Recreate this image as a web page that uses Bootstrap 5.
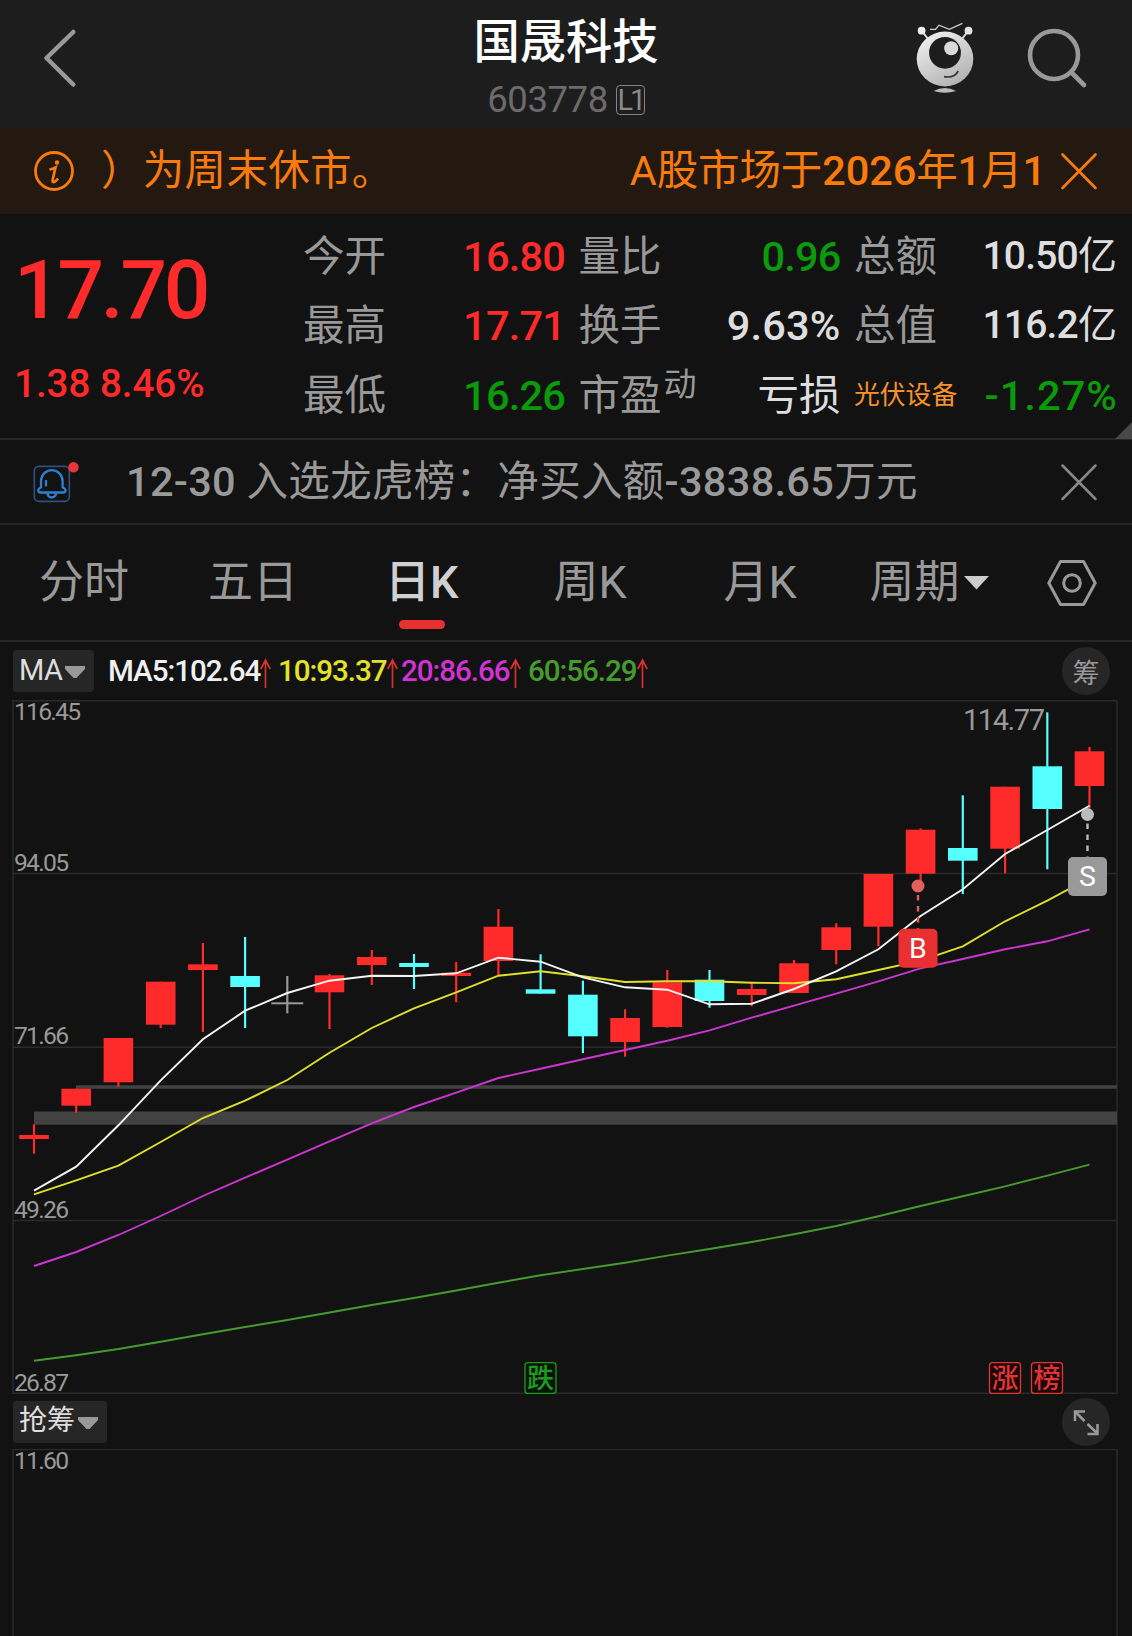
<!DOCTYPE html>
<html lang="zh-CN" data-bs-theme="dark">
<head>
<meta charset="utf-8">
<meta name="viewport" content="width=device-width, initial-scale=1">
<title>国晟科技 603778</title>
<link href="https://cdn.jsdelivr.net/npm/bootstrap@5.3.0/dist/css/bootstrap.min.css" rel="stylesheet">
<style>
  :root { --up:#ff2a2a; --down:#0a9b0a; --dim:#999; --lit:#dedede; --line:#262626; }
  html, body { height:1636px; overflow:hidden; }
  body { background:#121212; color:var(--dim); font-family:Roboto,"Noto Sans CJK SC",sans-serif; font-size:41.5px; line-height:1; }
  svg { display:block; flex:none; }
  .top-bar { height:128px; background:#1d1d1d; display:grid; grid-template-columns:1fr auto 1fr; }
  .stock-name { font-size:46.3px; font-weight:500; line-height:50px; color:#fff; margin-top:17px; }
  .stock-code { font-size:36.5px; line-height:36px; color:#6b6b6b; margin-top:15px; letter-spacing:-.4px; }
  .level-tag { border:1.5px solid #858585; border-radius:4px; width:29px; height:30px; font-size:29px; line-height:28px; color:#8a8a8a; letter-spacing:-3px; }
  .notice-bar { height:86px; background:#231911; color:#f87b0d; line-height:84px; }
  .notice-tail { margin-left:26px; letter-spacing:.3px; }
  .notice-next { letter-spacing:-.1px; margin-right:13px; }
  .din { font-weight:500; }
  .quote { height:226px; border-bottom:2px solid var(--line); padding:8px 15px 0 15px; }
  .quote-main { width:288px; color:var(--up); }
  .price { font-size:82px; font-weight:500; line-height:84px; margin-top:26px; letter-spacing:-3.2px; margin-left:-1px; }
  .change { font-size:38.5px; line-height:40px; margin-top:32px; letter-spacing:0; margin-left:-1px; white-space:pre; font-weight:500; }
  .quote-row { height:69.3px; line-height:69.3px; }
  .num { letter-spacing:-.8px; font-weight:500; }
  .wide-a { letter-spacing:.2px; } .wide-b { letter-spacing:1.1px; margin-right:-1px; }
  .up { color:var(--up); } .down { color:var(--down); } .lit { color:var(--lit); }
  .pe-kind { font-size:33px; position:relative; top:-14px; margin-left:2px; }
  .sector { font-size:25.8px; color:#f7922b; }
  .yi { font-size:39px; }
  .corner { right:0; bottom:-1px; }
  .news { height:85px; border-bottom:2px solid var(--line); line-height:83px; }
  .news-text { margin-left:46px; letter-spacing:.3px; }
  .periods { height:117px; border-bottom:2px solid var(--line); font-size:45px; line-height:116px; }
  .periods > * { position:relative; }
  .period-on { color:#d0d0d0; font-weight:500; margin-left:-2px; }
  .period-on::after { content:""; position:absolute; left:50%; margin-left:-23px; top:94.5px; width:46px; height:9px; border-radius:5px; background:#e83030; }
  .ma-bar { height:58px; padding:0 22px 0 13px; font-size:29.6px; }
  .pick { height:42px; background:#262626; color:var(--lit); border-radius:4px; line-height:40px; padding-left:6px; }
  .pick-ma { width:81px; font-size:29px; letter-spacing:-.6px; }
  .pick-chip { width:94px; font-size:28px; }
  .ma-list { font-weight:500; letter-spacing:-1.05px; line-height:56px; }
  .round { width:48px; height:48px; background:#262626; font-size:27px; border-radius:50%; line-height:54px; }
  .sub-bar { height:55px; padding:0 22px 0 13px; }
  .tick { fill:#999; font-size:24.7px; }
</style>
</head>
<body>
<header class="top-bar">
  <svg width="60" height="80" viewBox="34 15 60 80" style="margin:15px 0 0 34px" fill="none" stroke="#999" stroke-width="4.5" stroke-linecap="round" stroke-linejoin="round"><path d="M73.300 32 46.500 58 73.300 84.500"/></svg>
  <div class="text-center">
    <div class="stock-name">国晟科技</div>
    <div class="stock-code d-flex justify-content-center align-items-center gap-2">603778<span class="level-tag">L1</span></div>
  </div>
  <svg class="ms-auto" width="184" height="82" viewBox="910 15 184 82" style="margin:15px 38px 0 0">
    <defs><linearGradient id="silver" x1="0" y1="0" x2=".6" y2="1"><stop offset="0" stop-color="#f6f6f6"/><stop offset="1" stop-color="#b4b4b4"/></linearGradient></defs>
    <path d="M922 31 928 39M968 31 962 39" stroke="#ddd" stroke-width="2"/>
    <circle cx="921.6" cy="30.7" r="3.9" fill="#eee"/><circle cx="968.5" cy="30.7" r="3.9" fill="#e4e4e4"/>
    <path d="M930 29.4H935.5L939 25.2 949.4 29.4 962.4 23.4" fill="none" stroke="#ccc" stroke-width="1.3"/>
    <ellipse cx="945" cy="59" rx="28.3" ry="27.4" fill="url(#silver)"/>
    <circle cx="945" cy="52.8" r="15.9" fill="#1d1d1d"/><circle cx="951.2" cy="48.3" r="7" fill="#d9d9d9"/>
    <path d="M944 76.6Q954.500 78.500 958.200 71" fill="none" stroke="#333" stroke-width="1.7"/>
    <path d="M933.500 91Q945 85 956 91Q945 94.500 933.500 91Z" fill="#bbb"/>
    <g fill="none" stroke="#999" stroke-width="4.6" stroke-linecap="round"><circle cx="1054" cy="55" r="24"/><path d="M1072 73 1084 85"/></g>
  </svg>
</header>

<div class="notice-bar d-flex align-items-center">
  <svg width="42" height="42" viewBox="0 0 42 42" style="margin-left:33px" fill="none" stroke="#f87b0d" stroke-width="2.800"><circle cx="21" cy="21" r="18.500"/><circle cx="24" cy="12.500" r="2.200" fill="#f87b0d" stroke="none"/><path d="M16.500 19.500Q20 19 22.500 17.500L19.700 29.500Q19 33 21.500 31.800 23.500 30.500 25 28.500" stroke-width="2.700"/></svg>
  <span class="notice-tail">）为周末休市。</span>
  <span class="notice-next ms-auto">A股市场于<span class="din">2026</span>年<span class="din">1</span>月<span class="din">1</span></span>
  <svg width="40" height="40" viewBox="0 0 40 40" style="margin-right:33px" stroke="#f87b0d" stroke-width="2.700" stroke-linecap="round"><path d="M3.500 3.500 36.500 37M36.500 3.500 3.500 37"/></svg>
</div>

<section class="quote d-flex position-relative">
  <div class="quote-main">
    <div class="price">17.70</div>
    <div class="change">1.38 8.46%</div>
  </div>
  <div class="flex-grow-1 d-flex" style="gap:13.500px">
    <div style="width:262px">
      <div class="quote-row d-flex justify-content-between"><span>今开</span><span class="num up">16.80</span></div>
      <div class="quote-row d-flex justify-content-between"><span>最高</span><span class="num up">17.71</span></div>
      <div class="quote-row d-flex justify-content-between"><span>最低</span><span class="num down">16.26</span></div>
    </div>
    <div style="width:262px">
      <div class="quote-row d-flex justify-content-between"><span>量比</span><span class="num down">0.96</span></div>
      <div class="quote-row d-flex justify-content-between"><span>换手</span><span class="num lit wide-a">9.63%</span></div>
      <div class="quote-row d-flex justify-content-between"><span>市盈<span class="pe-kind">动</span></span><span class="lit">亏损</span></div>
    </div>
    <div style="width:263px">
      <div class="quote-row d-flex justify-content-between"><span>总额</span><span class="lit yi"><span class="num">10.50</span>亿</span></div>
      <div class="quote-row d-flex justify-content-between"><span>总值</span><span class="lit yi"><span class="num">116.2</span>亿</span></div>
      <div class="quote-row d-flex justify-content-between"><span class="sector">光伏设备</span><span class="num down wide-b">-1.27%</span></div>
    </div>
  </div>
  <svg class="corner position-absolute" width="17" height="17"><path d="M17 0V17H0Z" fill="#484848"/></svg>
</section>

<div class="news d-flex align-items-center">
  <svg width="48" height="48" viewBox="32 456 48 48" style="margin-left:32px" fill="none" stroke="#2b80d0" stroke-width="2.300" stroke-linecap="round" stroke-linejoin="round">
    <rect x="34.300" y="464.300" width="35" height="35" rx="4.500" stroke="#2c4f7d" stroke-width="1.700"/>
    <path d="M41 485.500V479A10.800 10.800 0 0 1 62.600 479V485.500Q65.500 486.500 65.500 488.500 65.500 490.500 63 490.500H40.500Q38.300 490.500 38.300 488.500 38.300 486.500 41 485.500ZM47.500 492Q48.500 495.500 51.800 495.500 55 495.500 56 492M46 479V483.500"/>
    <circle cx="73.500" cy="465.300" r="5.200" fill="#e83535" stroke="none"/>
  </svg>
  <span class="news-text"><span class="din">12-30</span> 入选龙虎榜：净买入额<span class="din">-3838.65</span>万元</span>
  <svg class="ms-auto" width="40" height="40" viewBox="0 0 40 40" style="margin-right:33px" stroke="#888" stroke-width="2.500" stroke-linecap="round"><path d="M3.500 3.500 36.500 37M36.500 3.500 3.500 37"/></svg>
</div>

<nav class="periods d-flex">
  <span style="margin-left:39px;width:169px">分时</span>
  <span style="width:179px">五日</span>
  <span class="period-on">日K</span>
  <span style="margin-left:95px;width:170px">周K</span>
  <span style="width:146px">月K</span>
  <span>周期</span>
  <svg width="25" height="14" style="margin:50.500px 0 0 5px"><path d="M0 0H25L12.500 13.500Z" fill="#ccc"/></svg>
  <svg class="ms-auto" width="52" height="52" viewBox="0 0 52 52" style="margin:31.500px 34px 0 0" fill="none" stroke="#999" stroke-width="3"><path d="M2.800 26 14.500 4.500H37.500L49.200 26 37.500 47.500H14.500Z" stroke-linejoin="round"/><circle cx="26" cy="26" r="8.300"/></svg>
</nav>

<div class="ma-bar d-flex align-items-center">
  <div class="pick pick-ma d-flex">MA<svg width="20" height="13" style="margin:16px 0 0 3px"><path d="M0 0H20V3L11.500 12H8.500L0 3Z" fill="#999"/></svg></div>
  <div class="ma-list d-flex" style="margin-left:14px" id="maList"></div>
  <div class="round ms-auto text-center">筹</div>
</div>

<svg id="kline" width="1132" height="694" viewBox="0 700 1132 694"></svg>

<div class="sub-bar d-flex align-items-center">
  <div class="pick pick-chip d-flex">抢筹<svg width="20" height="13" style="margin:16px 0 0 3px"><path d="M0 0H20V3L11.500 12H8.500L0 3Z" fill="#999"/></svg></div>
  <div class="round ms-auto d-flex align-items-center justify-content-center"><svg width="28" height="28" viewBox="0 0 28 28" fill="none" stroke="#999" stroke-width="2.500"><path d="M3 13V3.500H13M3.500 4 12.500 13M15.500 16 25 25M15.500 26H25.500V16"/></svg></div>
</div>

<svg width="1132" height="187" viewBox="0 1449 1132 187">
  <path d="M13 1637V1449.500H1117V1637" fill="none" stroke="#2a2a2a" stroke-width="1.500"/>
  <text class="tick" x="14" y="1469" textLength="55">11.60</text>
</svg>

<script src="https://cdn.jsdelivr.net/npm/bootstrap@5.3.0/dist/js/bootstrap.bundle.min.js"></script>
<script>
const UP = '#ff2a2a', DOWN = '#55ffff', FLAT = '#999';

// moving-average legend: label, colour, cell width
document.getElementById('maList').innerHTML = [
  ['MA5:102.64', '#f0f0f0', 170], ['10:93.37', '#e2e22a', 123],
  ['20:86.66', '#cf33d6', 127], ['60:56.29', '#459b2e', 130]
].map(([t, c, w]) => `<span class="d-flex" style="width:${w}px;color:${c}"><span>${t}</span>` +
  `<svg width="11" height="30" viewBox="0 0 11 30" style="margin:15px 0 0 0" fill="none" stroke="#d93030" stroke-width="1.700"><path d="M5.500 30V2M.800 11 5.500 2 10.200 11"/></svg></span>`).join('');

// candles: colour, high, body top, body bottom, low
const bars = [
  [UP,1124.3,1135,1139,1153.7],[UP,1088.7,1088.7,1105.7,1112.7],[UP,1038,1038,1082.3,1086.7],
  [UP,981.7,981.7,1024.7,1028],[UP,943,964.3,970,1032],[DOWN,937,976,987,1028],
  [FLAT,976,1002.3,1004.3,1013.3],[UP,974,975.3,992.3,1029],[UP,950,957,965,985],
  [DOWN,954,963,967,989],[UP,962,972.7,976,1002.3],[UP,909,926.7,961,975.7],
  [DOWN,954.3,989.3,993.7,993.7],[DOWN,980.7,994.7,1036.3,1053],[UP,1009.3,1018,1042,1056.7],
  [UP,970,982.3,1027,1027.7],[DOWN,970,979.7,1001,1007.7],[UP,983.3,989,995,1006.3],
  [UP,960,963.3,993,993],[UP,923.3,927.3,950,964.3],[UP,874,874,926.7,946.3],
  [UP,828.3,829.7,873.7,884],[DOWN,795.3,848,860.7,894],[UP,786.7,786.7,848.7,873.3],
  [DOWN,712.3,766.3,809,869.3],[UP,747,751.3,786,808]
];
const lines = {
  '#459b2e':[1360.7,1355.3,1349,1341.7,1334.3,1327,1320,1312.5,1305,1298,1290.5,1282.7,1275.3,1269,1262.7,1255.6,1249,1242,1234.3,1226,1216.3,1206,1196.3,1186.3,1175.7,1164.7],
  '#cc35d2':[1266,1252,1235,1216,1196,1177.7,1159.7,1141.3,1123.3,1107,1092.7,1078,1068.7,1059.3,1050,1040.7,1030.3,1017.7,1005.7,993.7,981.3,968.3,959,949.3,941.3,929.3],
  '#e0e02c':[1194.3,1180.3,1165.7,1142,1118,1100.7,1080,1052.7,1028,1008.3,992.3,975.7,971.3,976.3,982,981.3,981.3,982.7,983.3,979.3,970,960.7,946.3,921.3,900.7,878],
  '#f4f4f4':[1190.7,1166.7,1125.3,1080.3,1039.3,1010.7,993,980.7,975.7,976,973.3,957.7,961.7,977.3,987.3,989.7,1004.3,1003.7,989,971.3,949.3,916,889.3,854,830,805.7]
};
const cx = i => +(34 + i * 42.22).toFixed(1);
let s = '<g stroke="#2a2a2a" stroke-width="1.500" fill="none"><path d="M13 700.800H1117V1393.300H13Z"/><path d="M13 873.500H1117M13 1047.300H1117M13 1220.500H1117"/></g>';
s += '<path d="M76 1085.300H1117V1088.700H76ZM34 1111.500H1117V1124.700H34Z" fill="#424242"/>';
bars.forEach(([c, h, t, b, l], i) => {
  const w = c === FLAT ? 32 : 29.600;
  s += `<path d="M${cx(i)} ${h}V${l}" stroke="${c}" stroke-width="2.200"/><rect x="${cx(i) - w / 2}" y="${t}" width="${w}" height="${b - t}" fill="${c}"/>`;
});
for (const [c, ys] of Object.entries(lines))
  s += `<polyline fill="none" stroke="${c}" stroke-width="1.900" points="${ys.map((y, i) => cx(i) + ',' + y).join(' ')}"/>`;
[['116.45',720,67],['94.05',871,55],['71.66',1044,55],['49.26',1218,55],['26.87',1391,55]]
  .forEach(([t, y, w]) => s += `<text class="tick" x="14" y="${y}" textLength="${w}">${t}</text>`);
s += '<text x="963" y="730" font-size="29" fill="#999" textLength="82">114.77</text>';
// buy and sell pins
[[918,886,'#e06060',928.700,'#e83030','B'],[1087.5,814.500,'#bbb',857,'#999','S']].forEach(([x, y, c, by, bc, t]) => {
  s += `<path d="M${x} ${y + 9}V${by}" stroke="${c}" stroke-width="2.400" stroke-dasharray="5.500 5.500"/><circle cx="${x}" cy="${y}" r="6.500" fill="${c}"/>` +
    `<rect x="${x - 19.500}" y="${by}" width="39" height="39" rx="5" fill="${bc}"/><text x="${x}" y="${by + 29}" text-anchor="middle" font-size="28.500" fill="#fff">${t}</text>`;
});
// event tags on the bottom edge
[[540.5,'#1f9a1f','#04150a','跌'],[1005,'#e03535','#1c0808','涨'],[1047,'#e03535','#1c0808','榜']].forEach(([x, c, bg, t]) => {
  s += `<rect x="${x - 15.500}" y="1362.700" width="31" height="30.700" rx="3" fill="${bg}" stroke="${c}" stroke-width="1.300"/><text x="${x}" y="1388" text-anchor="middle" font-size="27" font-weight="500" fill="${c}">${t}</text>`;
});
document.getElementById('kline').innerHTML = s;
</script>
</body>
</html>
